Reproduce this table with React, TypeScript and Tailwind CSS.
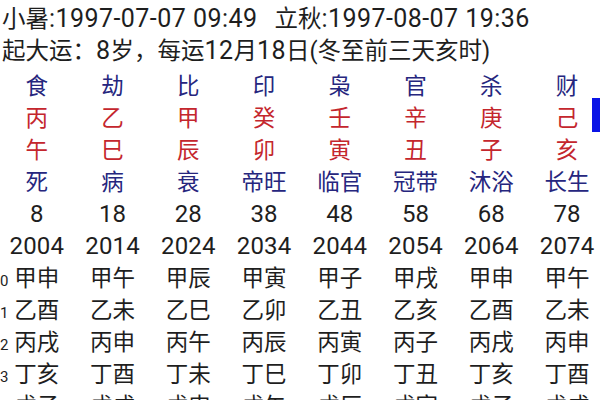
const font = "font-['Roboto','Noto_Sans_CJK_SC',sans-serif]";

const shishen = ["食", "劫", "比", "印", "枭", "官", "杀", "财"];
const gan = ["丙", "乙", "甲", "癸", "壬", "辛", "庚", "己"];
const zhi = ["午", "巳", "辰", "卯", "寅", "丑", "子", "亥"];
const state = ["死", "病", "衰", "帝旺", "临官", "冠带", "沐浴", "长生"];
const ages = ["8", "18", "28", "38", "48", "58", "68", "78"];
const years = ["2004", "2014", "2024", "2034", "2044", "2054", "2064", "2074"];

// liunian rows: each column is a decade, each row a year within it
const liunian = [
  ["甲申", "甲午", "甲辰", "甲寅", "甲子", "甲戌", "甲申", "甲午"],
  ["乙酉", "乙未", "乙巳", "乙卯", "乙丑", "乙亥", "乙酉", "乙未"],
  ["丙戌", "丙申", "丙午", "丙辰", "丙寅", "丙子", "丙戌", "丙申"],
  ["丁亥", "丁酉", "丁未", "丁巳", "丁卯", "丁丑", "丁亥", "丁酉"],
  ["戊子", "戊戌", "戊申", "戊午", "戊辰", "戊寅", "戊子", "戊戌"],
];

// digits in the screenshot are set a bit wider than the CJK text
function N({ children }: { children: React.ReactNode }) {
  return <span className="text-[24px] tracking-[0.2px]">{children}</span>;
}

function HN({ children }: { children: React.ReactNode }) {
  return <span className="text-[25px] tracking-[0.45px]">{children}</span>;
}

function Row({ items, color, num }: { items: string[]; color: string; num?: boolean }) {
  return (
    <>
      {items.map((t, i) => (
        <div key={i} className={`text-center ${color}`}>
          {num ? <N>{t}</N> : t}
        </div>
      ))}
    </>
  );
}

export default function App() {
  return (
    <div className={`relative w-[600px] h-[400px] overflow-hidden bg-white ${font} text-[22.5px]`}>
      {/* header */}
      <div className="pt-[3px] pl-[2px] text-[#1e1e1e] text-[23.5px] leading-[31px] whitespace-nowrap">
        <div className="flex">
          <span>
            小暑<HN>:1997-07-07 09:49</HN>
          </span>
          <span className="ml-[17px]">
            立秋<HN>:1997-08-07 19:36</HN>
          </span>
        </div>
        <div>
          起大运：<HN>8</HN>岁，每运<HN>12</HN>月<HN>18</HN>日(冬至前三天亥时)
        </div>
      </div>

      {/* pillars */}
      <div className="mt-[3px] -ml-px w-[606px] grid grid-cols-8 leading-[32px] whitespace-nowrap">
        <Row items={shishen} color="text-[#26267e]" />
        <Row items={gan} color="text-[#c4262d]" />
        <Row items={zhi} color="text-[#c4262d]" />
        <Row items={state} color="text-[#26267e]" />
        <Row items={ages} color="text-[#1e1e1e]" num />
        <Row items={years} color="text-[#1e1e1e]" num />
        {liunian.map((row, r) =>
          row.map((t, i) => (
            <div key={`${r}-${i}`} className="relative text-center text-[#1e1e1e]">
              {i === 0 && (
                <span className="absolute left-px top-[3px] text-[15px]">{r}</span>
              )}
              {t}
            </div>
          ))
        )}
      </div>

      {/* scroll marker */}
      <div className="absolute right-0 top-[98px] w-[8px] h-[34px] bg-[#0a14e6]" />
    </div>
  );
}
